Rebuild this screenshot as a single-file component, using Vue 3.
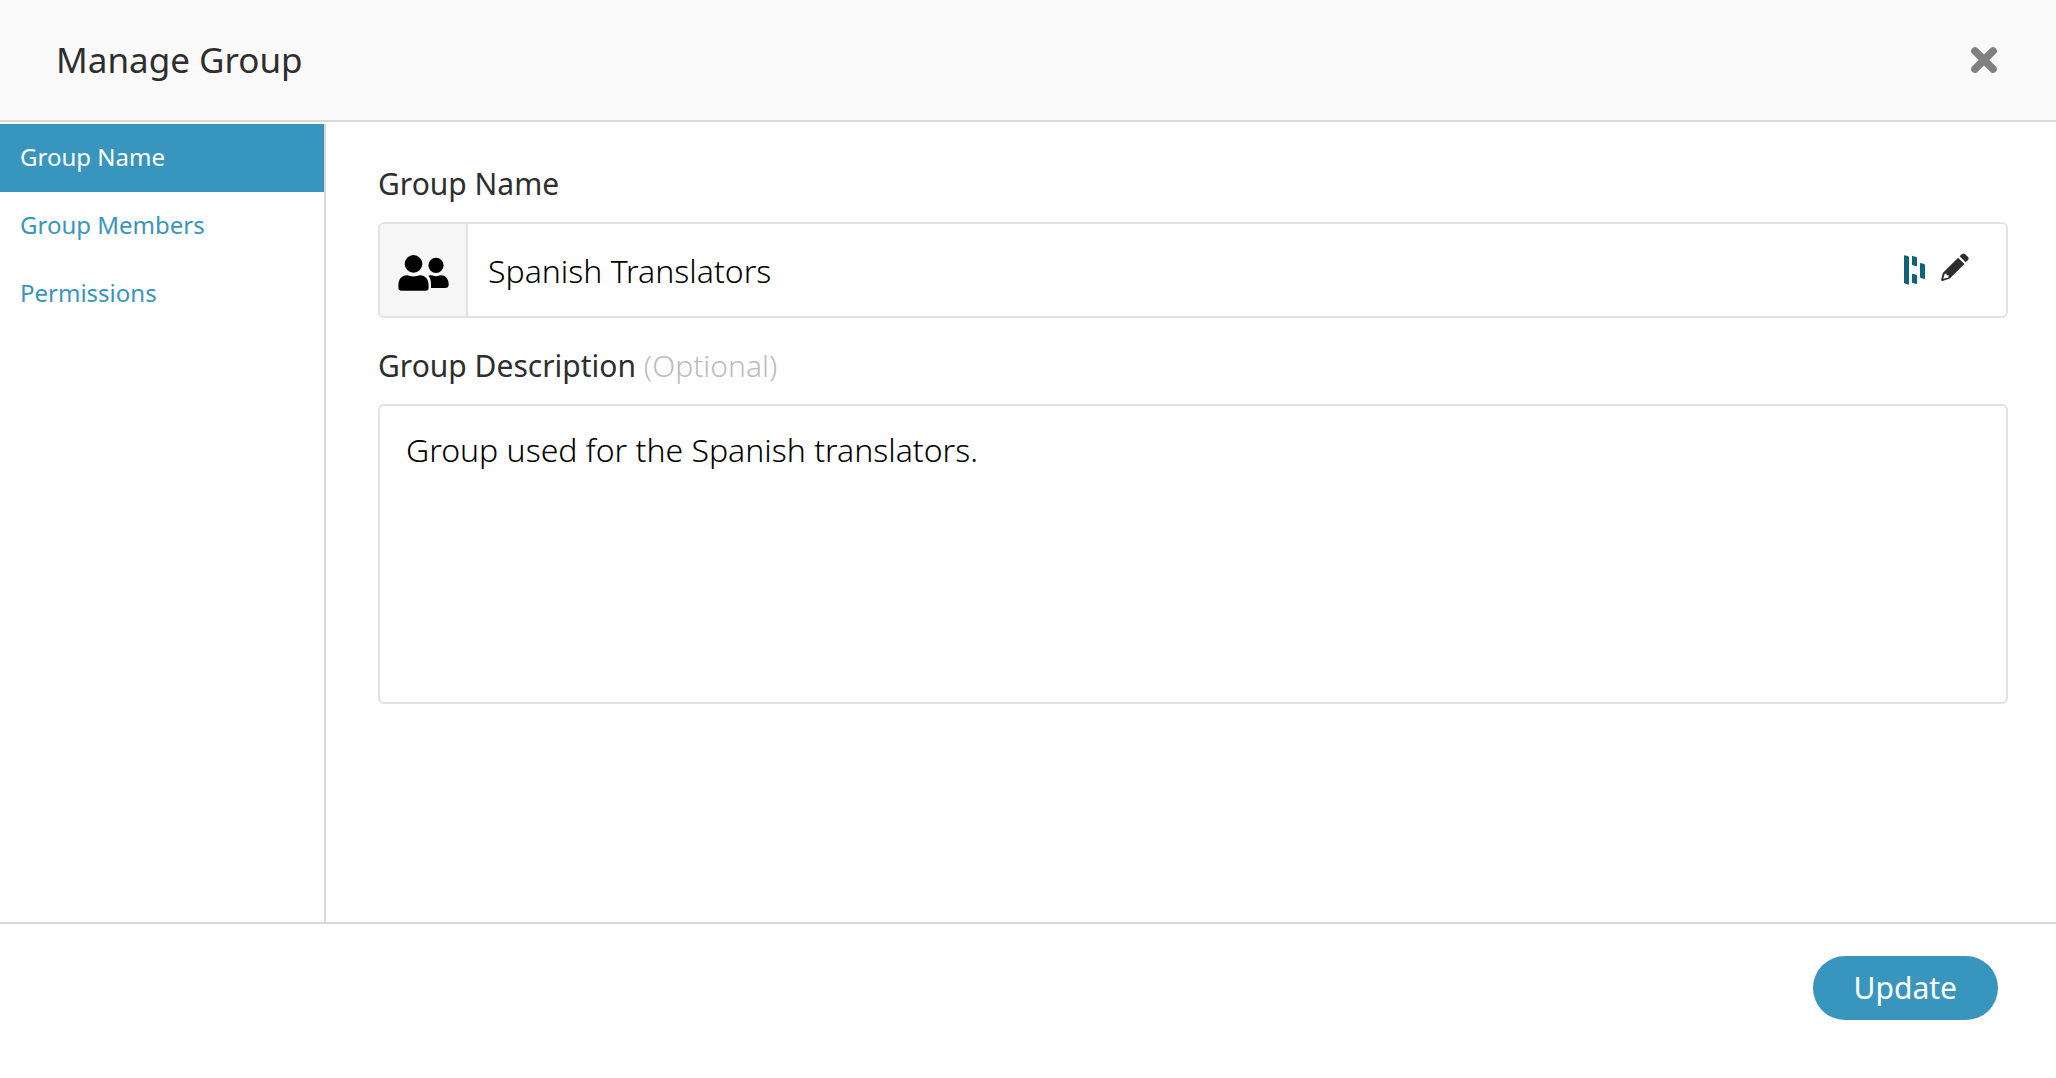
<script setup>
import { ref } from 'vue'

const sections = ['Group Name', 'Group Members', 'Permissions']
const active = ref('Group Name')
const name = ref('Spanish Translators')
const description = ref('Group used for the Spanish translators.')
</script>

<template>
  <div class="dialog">
    <header class="header">
      <h1 class="title">Manage Group</h1>
      <button class="icon-button" type="button" aria-label="Close">
        <svg width="26" height="26" viewBox="0 0 26 26">
          <path d="M4 4L22 22M22 4L4 22" stroke="#808080" stroke-width="7.6" stroke-linecap="round" />
        </svg>
      </button>
    </header>

    <div class="body">
      <nav class="sidebar">
        <a
          v-for="section in sections"
          :key="section"
          href="#"
          class="nav-item"
          :class="{ active: section === active }"
          @click.prevent="active = section"
        >{{ section }}</a>
      </nav>

      <main class="content">
        <label class="label" for="group-name">Group Name</label>
        <div class="name-field">
          <span class="prefix">
            <svg width="52" height="36" viewBox="0 0 52 36">
              <circle cx="15.5" cy="8.9" r="8.8" />
              <circle cx="38" cy="10.3" r="7.6" />
              <path d="M9 20.3C11 20.3 12.5 21.6 15.5 21.6S20 20.3 22 20.3C27.5 20.3 30.6 24.5 30.6 30.5V33C30.6 35 29.5 35.7 27.5 35.7H3.5C1.5 35.7 .4 35 .4 33V30.5C.4 24.5 3.5 20.3 9 20.3Z" />
              <path d="M30.5 20.7C32 20.2 33.5 20.2 34.5 20.6C37 21.5 39 21.5 41.5 20.6C46.5 19.3 50.7 23.5 50.7 29.5C50.7 32 49.5 33 47 33H33V30C33 26 32.5 23.5 30.5 20.7Z" />
            </svg>
          </span>
          <input id="group-name" v-model="name" class="name-input" type="text" />
          <span class="tools">
            <svg width="21" height="30" viewBox="0 0 21 30" fill="#0e6376">
              <path d="M0 .8Q0 0 .8 .2L4.2 1.2Q5 1.5 5 2.3V28.8Q5 29.8 4 29.6L.8 28.6Q0 28.4 0 27.6Z" />
              <path d="M8 1.5Q8 .7 8.8 .9L12.2 1.9Q13 2.2 13 3V10.7Q13 11.5 12.2 11.3L8.8 10.3Q8 10 8 9.2Z" />
              <path d="M8 19.3Q8 18.5 8.8 18.7L12.2 19.7Q13 20 13 20.8V28.4Q13 29.2 12.2 29L8.8 28Q8 27.8 8 27Z" />
              <path d="M16 8.6Q16 7.8 16.8 8L20.2 9Q21 9.3 21 10.1V23.2Q21 24.1 20.2 23.9L16.8 22.9Q16 22.6 16 21.8Z" />
            </svg>
            <button class="icon-button edit" type="button" aria-label="Edit name">
              <svg width="28" height="28" viewBox="0 0 28 28" fill="#2e2e2e">
                <path d="M18.6 3.3L21 1Q22.6 -.3 24.2 1.2L26.8 3.8Q28.4 5.4 27 7L24.7 9.3Z" />
                <path fill-rule="evenodd" d="M17.1 4.7L23.4 10.9L8.8 25.5L1.6 27.9Q0 28.2 .2 26.6L1.8 20ZM3.6 21L2.3 25.7L7 24.7L8 22.6L5.8 22.2L5.3 20.4Z" />
              </svg>
            </button>
          </span>
        </div>

        <label class="label" for="group-description">
          Group Description <span class="optional">(Optional)</span>
        </label>
        <textarea id="group-description" v-model="description" class="description"></textarea>
      </main>
    </div>

    <footer class="footer">
      <button class="update" type="button">Update</button>
    </footer>
  </div>
</template>

<style>
body {
  margin: 0;
  background: #fff;
}
</style>

<style scoped>
.dialog,
.dialog * {
  box-sizing: border-box;
}

.dialog {
  display: flex;
  flex-direction: column;
  min-height: 100vh;
  font-family: "Noto Sans", "Open Sans", sans-serif;
  color: #2e2e2e;
}

.header {
  display: flex;
  align-items: center;
  justify-content: space-between;
  padding: 35px 59px 35px 56px;
  border-bottom: 2px solid #d9d9d9;
  background: #fafafa;
}

.title {
  margin: 0;
  font-size: 35px;
  font-weight: 400;
  line-height: 50px;
}

.icon-button {
  display: flex;
  padding: 0;
  border: 0;
  background: none;
  cursor: pointer;
}

.edit {
  padding-bottom: 6px;
}

.body {
  display: flex;
  flex: 1;
  padding-top: 2px;
}

.sidebar {
  flex: none;
  width: 326px;
  border-right: 2px solid #d9d9d9;
}

.nav-item {
  display: block;
  padding: 15px 20px 17px;
  color: #3896be;
  font-size: 24px;
  line-height: 36px;
  text-decoration: none;
}

.nav-item.active {
  background: #3896be;
  color: #fff;
}

.content {
  display: flex;
  flex: 1;
  flex-direction: column;
  padding: 40px 48px 40px 52px;
}

.label {
  margin-bottom: 18px;
  font-size: 30px;
  line-height: 40px;
}

.optional {
  color: #bcbcbc;
  font-weight: 300;
}

.name-field {
  display: flex;
  height: 96px;
  margin-bottom: 28px;
  overflow: hidden;
  border: 2px solid #e2e2e2;
  border-radius: 6px;
}

.prefix {
  display: flex;
  align-items: center;
  justify-content: center;
  width: 88px;
  padding-top: 6px;
  padding-left: 2px;
  border-right: 2px solid #e2e2e2;
  background: #f6f6f6;
}

.name-input {
  flex: 1;
  min-width: 0;
  padding: 0 20px;
  border: 0;
  outline: 0;
  background: none;
  color: #000;
  font-family: inherit;
  font-size: 32px;
  font-weight: 300;
}

.tools {
  display: flex;
  align-items: center;
  gap: 16px;
  padding-right: 37px;
}

.description {
  height: 300px;
  padding: 22px 26px;
  border: 2px solid #e2e2e2;
  border-radius: 6px;
  outline: 0;
  resize: none;
  color: #000;
  font-family: inherit;
  font-size: 32px;
  font-weight: 300;
  line-height: 44px;
}

.footer {
  display: flex;
  justify-content: flex-end;
  padding: 32px 58px 58px;
  border-top: 2px solid #d9d9d9;
}

.update {
  height: 64px;
  padding: 0 41px 2px;
  border: 0;
  border-radius: 32px;
  background: #3896be;
  color: #fff;
  font-family: inherit;
  font-size: 30px;
  cursor: pointer;
}
</style>
